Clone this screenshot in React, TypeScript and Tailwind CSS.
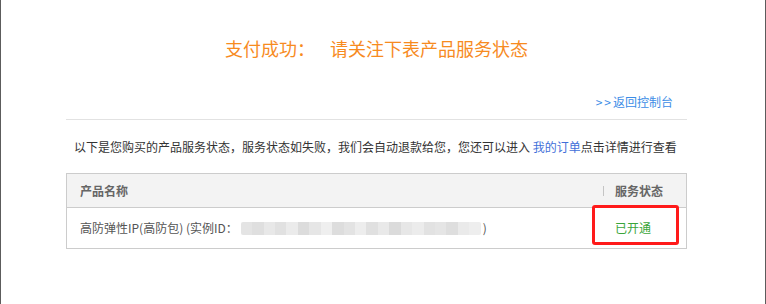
const FONT = '"Microsoft YaHei", "Noto Sans CJK SC", "Noto Sans", sans-serif';

// blurred instance id (mosaic blocks)
const MOSAIC = [
  "#e2e2e2", "#dcdcdc", "#e6e6e6", "#dedede", "#e9e9e9", "#d9d9d9", "#e4e4e4",
  "#eeeeee", "#dadada", "#e1e1e1", "#ececec", "#dddddd", "#e7e7e7", "#d8d8d8",
  "#e5e5e5", "#eaeaea", "#dfdfdf", "#e3e3e3", "#dbdbdb", "#e8e8e8", "#ededed",
];

function BlurredId() {
  return (
    <span className="ml-[3px] mr-[2px] inline-flex h-[13px] w-[240px] overflow-hidden rounded-[2px] opacity-90">
      {MOSAIC.map((c, i) => (
        <span key={i} className="h-full flex-1" style={{ backgroundColor: c }} />
      ))}
    </span>
  );
}

export default function App() {
  return (
    <div
      className="h-[304px] w-[766px] overflow-hidden border-x border-[#5c5c5c] bg-white"
      style={{ fontFamily: FONT }}
    >
      <div className="ml-[65px] w-[621px] pt-[36px]">
        <h1 className="flex h-6 items-center justify-center text-[18px] leading-6 text-[#f78b1f]">
          <span>支付成功：</span>
          <span className="ml-[15px]">请关注下表产品服务状态</span>
        </h1>

        <div className="mt-[34px] flex justify-end border-b border-[#e2e2e2] pb-[9px] pr-[14px]">
          <a className="text-[12px] leading-4 text-[#3c8de6]">
            <span className="tracking-[2px]">&gt;&gt;</span>返回控制台
          </a>
        </div>

        <p className="mt-[19px] whitespace-nowrap pl-[8px] text-[12px] leading-4 text-[#333]">
          以下是您购买的产品服务状态，服务状态如失败，我们会自动退款给您，您还可以进入{" "}
          <a className="text-[#3f6fd9]">我的订单</a>点击详情进行查看
        </p>

        <div className="mt-[18px] border border-[#cccccc] text-[12px] leading-4">
          <div className="flex h-[34px] items-center border-b border-[#cccccc] bg-[#f3f3f3] font-bold text-[#666]">
            <span className="flex-1 pl-[13px]">产品名称</span>
            <span className="flex w-[83px] items-center">
              <span className="mr-[11px] h-[10px] w-px bg-[#c4c4c4]" />
              服务状态
            </span>
          </div>
          <div className="flex h-[40px] items-center text-[#555]">
            <span className="flex flex-1 items-center pl-[13px]">
              高防弹性IP(高防包) (实例ID：
              <BlurredId />)
            </span>
            <span className="relative w-[83px] pl-[12px] text-[#3aa53a]">
              已开通
              <span className="absolute -top-[15px] left-[-11px] h-[40px] w-[87px] rounded-[3px] border-[3px] border-[#ff1a1a]" />
            </span>
          </div>
        </div>
      </div>
    </div>
  );
}
